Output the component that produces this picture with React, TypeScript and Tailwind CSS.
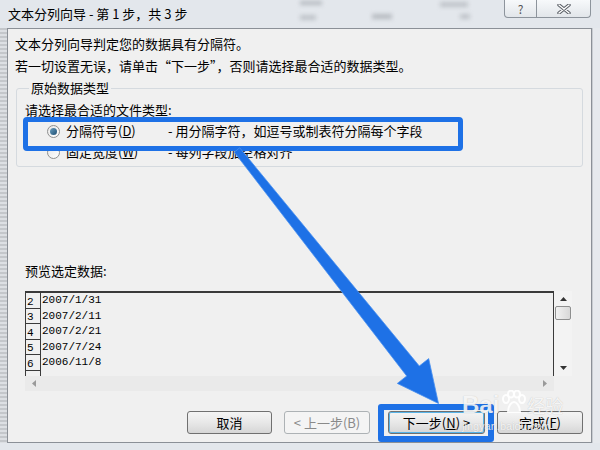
import React from "react";

const rows = [
  ["2", "2007/1/31"],
  ["3", "2007/2/11"],
  ["4", "2007/2/21"],
  ["5", "2007/7/24"],
  ["6", "2006/11/8"],
];

function Radio({ checked }: { checked?: boolean }) {
  return (
    <span className="flex h-[13px] w-[13px] items-center justify-center rounded-full border border-[#8e8f8f] bg-gradient-to-br from-[#e6e6e6] to-[#ffffff]">
      {checked && (
        <span className="h-[7px] w-[7px] rounded-full bg-gradient-to-br from-[#6a9fc0] to-[#1d4f73]" />
      )}
    </span>
  );
}

function Btn({
  children,
  w,
  disabled,
  primary,
}: {
  children: React.ReactNode;
  w: string;
  disabled?: boolean;
  primary?: boolean;
}) {
  return (
    <div
      className={
        "flex h-[23px] items-center justify-center rounded-[3px] border text-[13px] leading-none " +
        w +
        (disabled
          ? " border-[#adb2b5] bg-[#f4f4f4] text-[#8a8a8a]"
          : " border-[#707070] bg-gradient-to-b from-[#f4f4f4] via-[#e8e8e8] to-[#d6d6d6] text-black") +
        (primary ? " shadow-[inset_0_0_0_1px_#58b4e8]" : "")
      }
    >
      {children}
    </div>
  );
}

export default function App() {
  return (
    <div className="relative h-[450px] w-[600px] overflow-hidden bg-[#e3e7ec] font-['Noto_Sans_CJK_SC','Noto_Sans',sans-serif] text-[13px] text-black">
      {/* blurred sheet behind the glass title bar */}
      <div className="pointer-events-none absolute left-[300px] top-[1px] h-[4px] w-[22px] bg-[#8a8f96]/50 blur-[2px]" />
      <div className="pointer-events-none absolute left-[372px] top-[14px] h-[5px] w-[20px] bg-[#8a8f96]/50 blur-[2px]" />
      <div className="pointer-events-none absolute left-[440px] top-[2px] h-[5px] w-[28px] bg-[#8a8f96]/40 blur-[2px]" />
      <div className="pointer-events-none absolute left-[300px] top-[15px] h-[5px] w-[16px] bg-[#8a8f96]/40 blur-[2px]" />
      <div className="pointer-events-none absolute left-[460px] top-[14px] h-[5px] w-[10px] bg-[#8a8f96]/40 blur-[2px]" />

      {/* title bar */}
      <div className="relative flex h-[28px] items-start">
        <div className="pl-[8px] pt-[4px] leading-[20px]">文本分列向导 - 第 1 步，共 3 步</div>
        <div className="ml-auto mr-[9px] flex h-[18px]">
          <div className="flex w-[33px] items-center justify-center rounded-bl-[4px] border border-t-0 border-[#8d949c] bg-gradient-to-b from-[#f7f9fb] to-[#e2e6ea] text-[12px] leading-none text-[#555]">
            ?
          </div>
          <div className="flex w-[54px] items-center justify-center rounded-br-[4px] border border-l-0 border-t-0 border-[#8d949c] bg-gradient-to-b from-[#f7f9fb] to-[#e2e6ea]">
            <svg width="14" height="10" viewBox="0 0 14 10">
              <path d="M2 1 L12 9 M12 1 L2 9" stroke="#5a5f66" strokeWidth="3.4" strokeLinecap="round" />
              <path d="M2 1 L12 9 M12 1 L2 9" stroke="#ffffff" strokeWidth="1.4" strokeLinecap="round" />
            </svg>
          </div>
        </div>
      </div>

      {/* window body */}
      <div className="flex h-[415px]">
        <div className="w-[7px] bg-[repeating-linear-gradient(180deg,#c4c7cb_0px,#c4c7cb_2px,#dcdfe3_2px,#dcdfe3_4px)]" />
        <div className="flex w-[585px] flex-col border border-b border-[#8b9097] bg-[#f0f0f0] px-[7px]">
          <div className="mt-[5px] h-[20px] leading-[20px]">文本分列向导判定您的数据具有分隔符。</div>
          <div className="mt-[2px] h-[20px] leading-[20px]">
            若一切设置无误，请单击“下一步”，否则请选择最合适的数据类型。
          </div>

          <fieldset className="ml-[1px] mt-[3px] w-[567px] rounded-[3px] border border-[#d5dadf] pb-[4px] pl-[8px]">
            <legend className="ml-[4px] px-[2px] leading-[18px]">原始数据类型</legend>
            <div className="mt-[3px] h-[20px] leading-[20px]">请选择最合适的文件类型:</div>
            <div className="mt-[1px] flex h-[20px] items-center">
              <span className="ml-[22px]">
                <Radio checked />
              </span>
              <span className="ml-[6px] w-[102px] leading-[20px]">
                分隔符号(<span className="underline">D</span>)
              </span>
              <span className="leading-[20px]">- 用分隔字符，如逗号或制表符分隔每个字段</span>
            </div>
            <div className="mt-[1px] flex h-[20px] items-center">
              <span className="ml-[22px]">
                <Radio />
              </span>
              <span className="ml-[6px] w-[102px] leading-[20px]">
                固定宽度(<span className="underline">W</span>)
              </span>
              <span className="leading-[20px]">- 每列字段加空格对齐</span>
            </div>
          </fieldset>

          <div className="ml-[10px] mt-[94px] h-[20px] leading-[20px]">预览选定数据:</div>

          {/* preview */}
          <div className="ml-[10px] mt-[10px] flex w-[547px] flex-col">
            <div className="flex h-[85px]">
              <div className="flex w-[529px] flex-col overflow-hidden border-l border-r border-t-2 border-[#3a3a3a] bg-[#f0f0f0]">
                {rows.map(([n, d]) => (
                  <div key={n} className="flex h-[15.6px] shrink-0">
                    <div className="flex w-[15px] shrink-0 items-end border-b border-r border-[#3a3a3a] pl-[1px] font-['Liberation_Mono',monospace] text-[11px] leading-[11px]">
                      {n}
                    </div>
                    <div className="pl-[1px] font-['Liberation_Mono',monospace] text-[11px] leading-[15px]">{d}</div>
                  </div>
                ))}
                <div className="h-[8px] w-[15px] border-r border-[#3a3a3a]" />
              </div>
              <div className="relative flex w-[18px] flex-col items-center bg-[#f3f3f3]">
                <svg className="mt-[6px]" width="7" height="4" viewBox="0 0 7 4">
                  <path d="M0 4 L3.5 0 L7 4 Z" fill="#333" />
                </svg>
                <div className="mt-[5px] h-[14px] w-[16px] rounded-[2px] border border-[#8e8f8f] bg-gradient-to-r from-[#f2f2f2] to-[#d8d8d8]" />
                <svg className="mt-auto mb-[6px]" width="7" height="4" viewBox="0 0 7 4">
                  <path d="M0 0 L7 0 L3.5 4 Z" fill="#333" />
                </svg>
              </div>
            </div>
            <div className="flex h-[15px] w-[529px] items-center justify-between bg-[#eaeaea] px-[7px]">
              <svg width="4" height="7" viewBox="0 0 4 7">
                <path d="M4 0 L0 3.5 L4 7 Z" fill="#9a9a9a" />
              </svg>
              <svg width="4" height="7" viewBox="0 0 4 7">
                <path d="M0 0 L4 3.5 L0 7 Z" fill="#9a9a9a" />
              </svg>
            </div>
          </div>

          {/* buttons */}
          <div className="mr-[1px] mt-[20px] flex justify-end">
            <Btn w="w-[85px]">取消</Btn>
            <div className="ml-[12px]">
              <Btn w="w-[86px]" disabled>
                &lt; 上一步(B)
              </Btn>
            </div>
            <div className="ml-[18px]">
              <Btn w="w-[97px]" primary>
                下一步(<span className="underline">N</span>) &gt;
              </Btn>
            </div>
            <div className="ml-[12px]">
              <Btn w="w-[86px]">
                完成(<span className="underline">F</span>)
              </Btn>
            </div>
          </div>
        </div>
        <div className="flex-1 border-l border-[#c8ccd1] bg-[#e6e9ed]" />
      </div>

      {/* blue annotation boxes */}
      <div className="pointer-events-none absolute left-[23px] top-[117px] h-[34px] w-[440px] rounded-[4px] border-[5px] border-[#1e71e6]" />
      <div className="pointer-events-none absolute left-[378px] top-[404px] h-[38px] w-[116px] rounded-[3px] border-[6px] border-[#1e71e6]" />

      {/* blue arrow */}
      <svg className="pointer-events-none absolute left-0 top-0" width="600" height="450" viewBox="0 0 600 450">
        <polygon
          points="239.7,147.8 419.3,366 428.7,358.6 438.5,403.5 397.3,383.4 406.7,376 234.3,152.2"
          fill="#1e71e6"
          stroke="#4b92f0"
          strokeWidth="0.8"
        />
      </svg>

      {/* watermark */}
      <div className="pointer-events-none absolute left-[462px] top-[390px] flex flex-col text-white/85 [text-shadow:0_0_1px_rgba(0,0,0,0.25)]">
        <div className="flex items-end font-['Liberation_Sans',sans-serif] text-[24px] font-bold leading-[26px]">
          <span>Bai</span>
          <svg className="mx-[1px] mb-[2px]" width="26" height="26" viewBox="0 0 26 26">
            <g fill="none" stroke="rgba(255,255,255,0.9)" strokeWidth="2">
              <ellipse cx="6" cy="9" rx="3" ry="4" />
              <ellipse cx="11" cy="4" rx="3" ry="3.5" />
              <ellipse cx="17" cy="4" rx="3" ry="3.5" />
              <ellipse cx="22" cy="9" rx="3" ry="4" />
              <path d="M8 22 C8 15 12 12 14 12 C16 12 20 15 20 22 Z" />
            </g>
          </svg>
          <span className="font-['Noto_Sans_CJK_SC',sans-serif] text-[18px] font-normal">经验</span>
        </div>
        <div className="mt-[2px] font-['Liberation_Sans',sans-serif] text-[11px] leading-[12px]">jingyan.baidu.com</div>
      </div>
    </div>
  );
}
